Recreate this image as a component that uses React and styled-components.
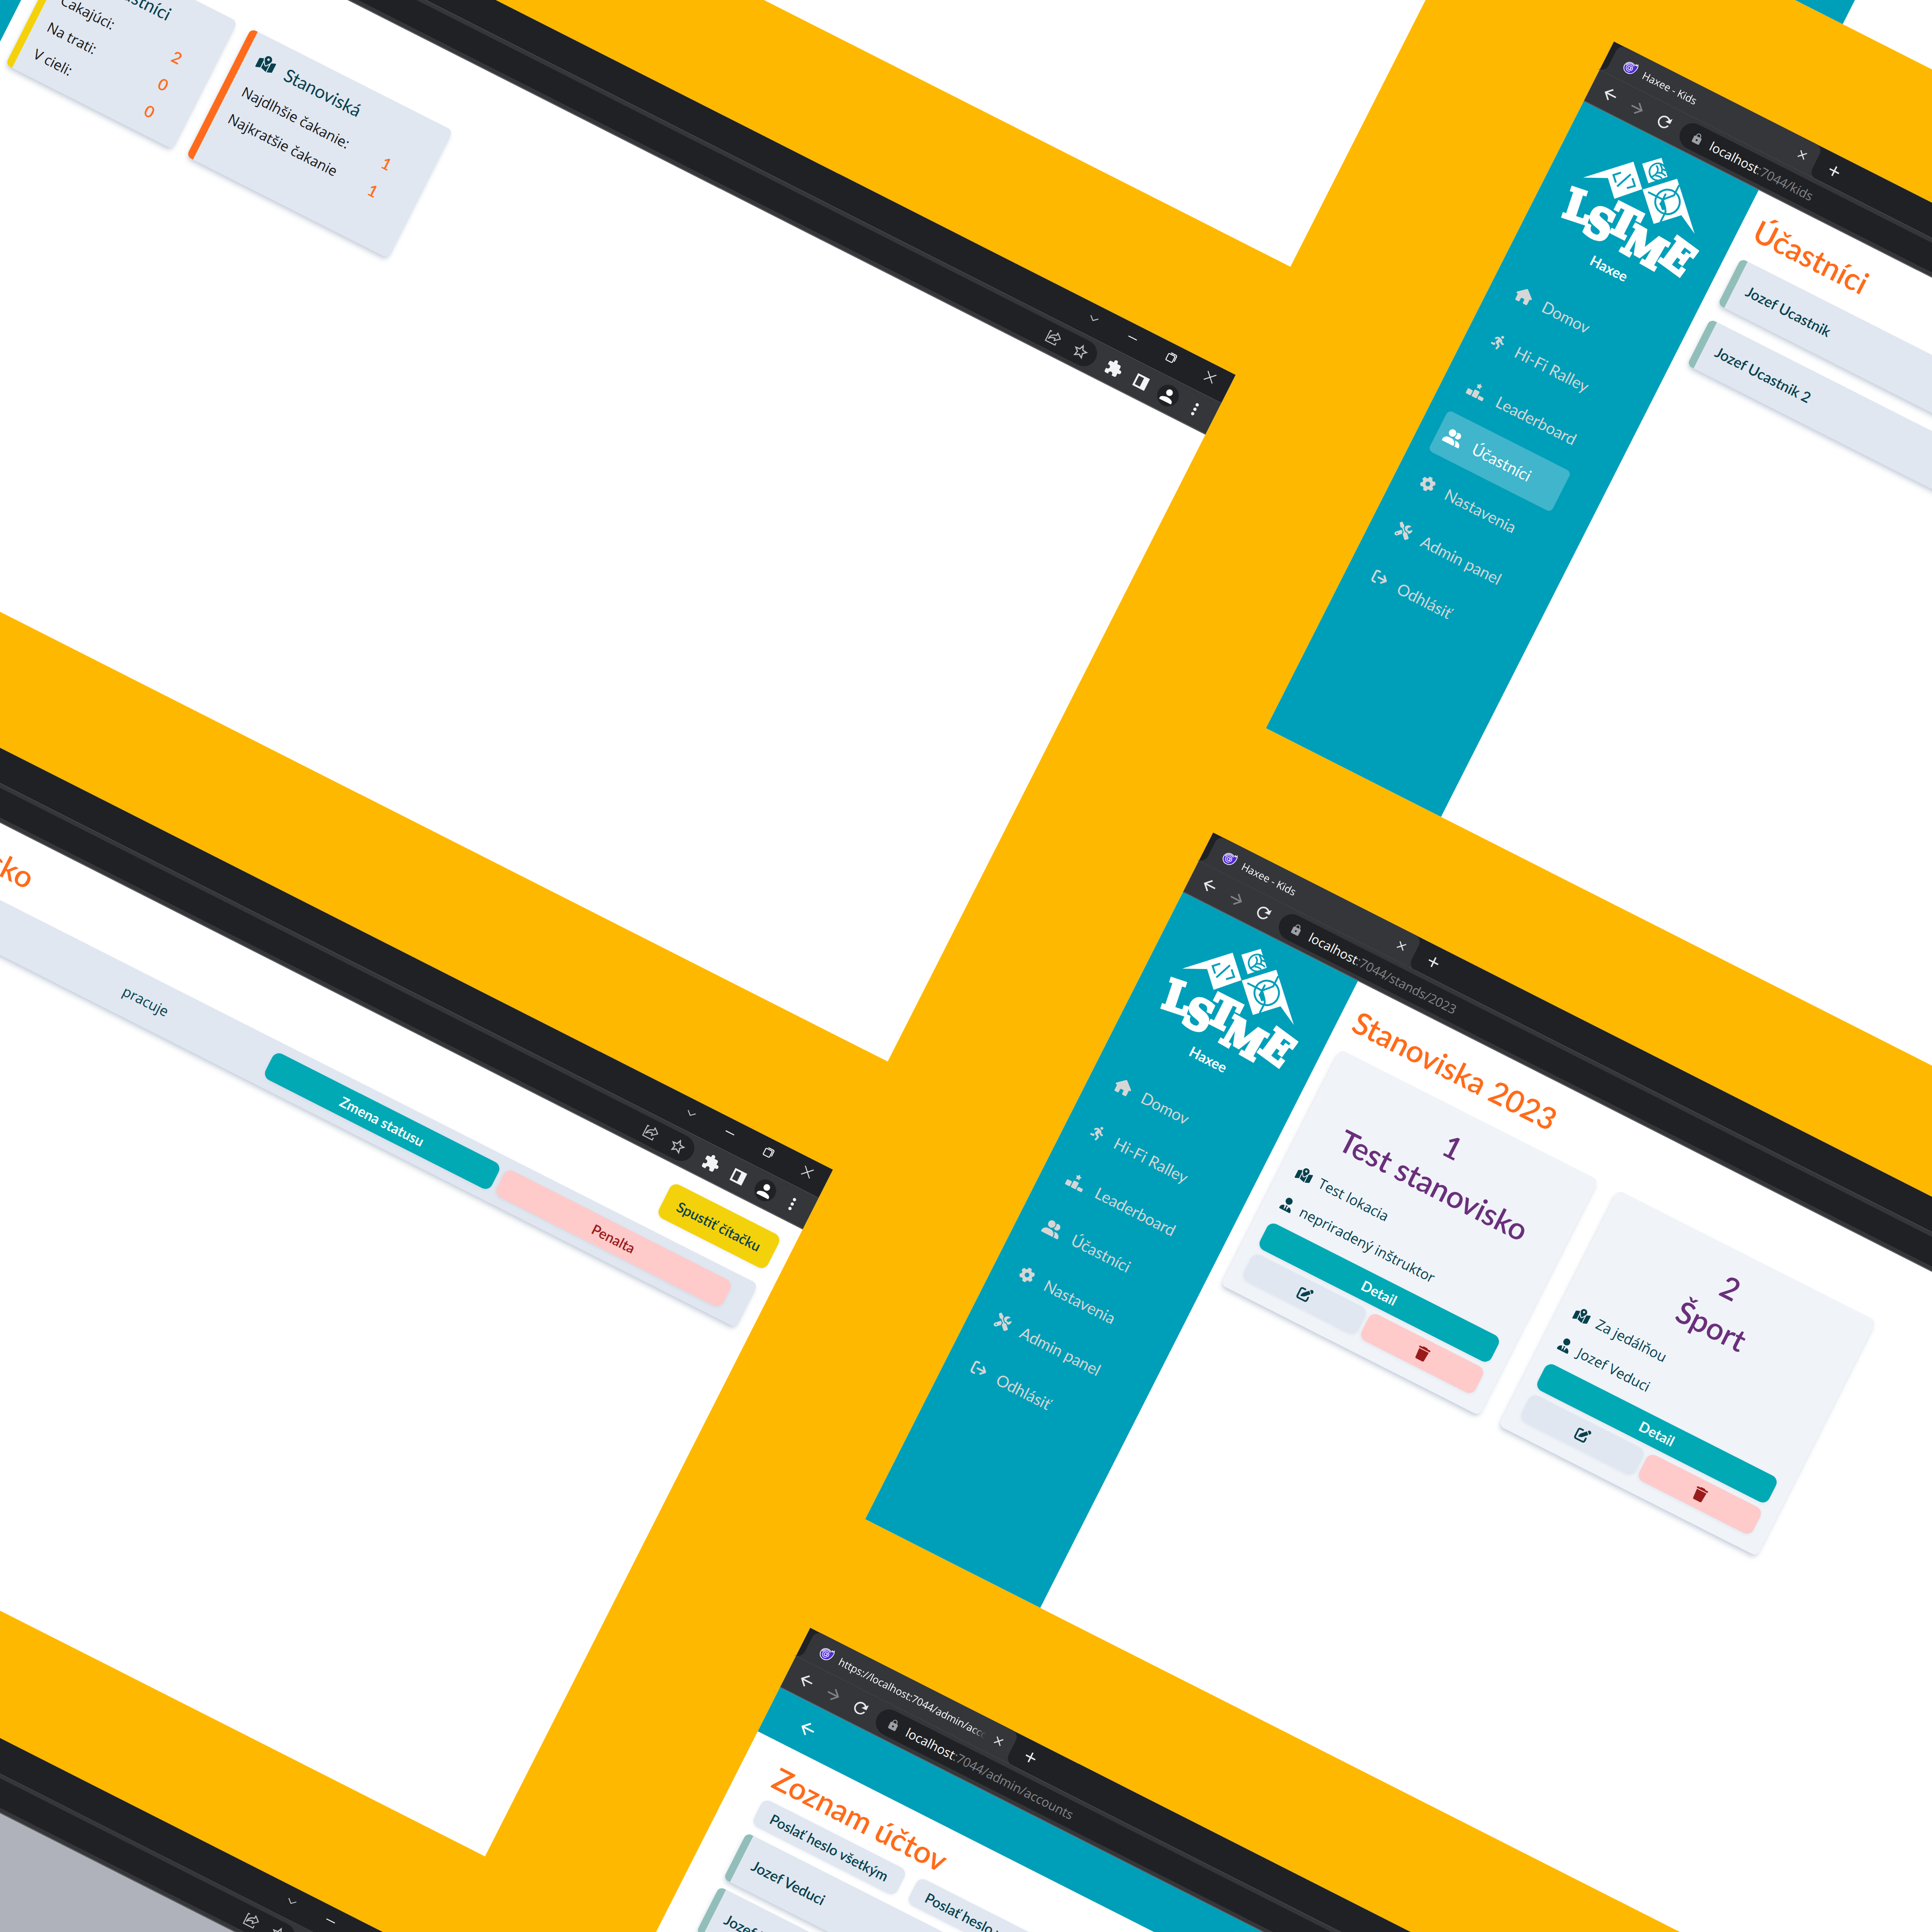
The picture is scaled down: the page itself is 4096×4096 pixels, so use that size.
import React from "react";
import styled, { createGlobalStyle, css } from "styled-components";
import {
  FaHouse,
  FaPersonRunning,
  FaRankingStar,
  FaUserGroup,
  FaGear,
  FaScrewdriverWrench,
  FaArrowRightFromBracket,
  FaMapLocationDot,
  FaUserTie,
  FaPenToSquare,
  FaTrash,
} from "react-icons/fa6";
import {
  MdArrowBack,
  MdArrowForward,
  MdRefresh,
  MdLock,
  MdClose,
  MdAdd,
  MdExtension,
  MdStarBorder,
  MdPerson,
  MdMoreVert,
} from "react-icons/md";

const color = {
  backdrop: "#ffb800",
  teal: "#009fb9",
  action: "#00a9b4",
  orange: "#ff6b1a",
  purple: "#6a2f7b",
  yellow: "#f4d20b",
  mint: "#92beb9",
  ink: "#06414d",
  panel: "#e1e7f0",
  card: "#f0f4f9",
  pink: "#fecaca",
  red: "#991b1b",
  frame: "#202124",
  toolbar: "#35363a",
};

const appFont = css`
  font-family: Lato, "Open Sans", sans-serif;
`;

const bodyFont = css`
  font-family: "Open Sans", "Noto Sans", sans-serif;
  font-size: 30px;
`;

const Global = createGlobalStyle`
  *, *::before, *::after { box-sizing: border-box; }
  html, body { margin: 0; background: ${color.backdrop}; }
  button { border: 0; margin: 0; font: inherit; color: inherit; cursor: pointer; }
  a { color: inherit; text-decoration: none; }
  h1, h2, p, dl, dt, dd, ul { margin: 0; padding: 0; font-weight: inherit; }
  svg { display: block; flex: none; }
`;

/* ---------- canvas ---------- */

const Stage = styled.div`
  height: 100vh;
  overflow: hidden;
  background: ${color.backdrop};
`;

const Board = styled.div`
  display: flex;
  align-items: flex-start;
  gap: 396px;
  width: max-content;
  transform-origin: 0 0;
  transform: rotate(26.87deg) translate(-376px, -3352px);
`;

const Column = styled.div`
  display: flex;
  flex-direction: column;
  padding-top: ${(p) => p.$top || 0}px;
`;

const Frame = styled.section`
  display: flex;
  flex-direction: column;
  width: 3072px;
  height: 1632px;
  margin-bottom: ${(p) => p.$gap}px;
  background: ${(p) => p.$surface || "#fff"};
  ${appFont}
`;

/* ---------- browser chrome ---------- */

const chromeFont = css`
  font-family: "Open Sans", "Noto Sans", sans-serif;
`;

const TabStrip = styled.div`
  display: flex;
  align-items: flex-start;
  flex: none;
  height: 67px;
  padding-left: 13px;
  background: ${color.frame};
  color: #fff;
  ${chromeFont}
`;

const Tab = styled.div`
  position: relative;
  display: flex;
  align-items: center;
  gap: 16px;
  width: 484px;
  height: 67px;
  padding: 0 18px 0 28px;
  border-radius: 16px 16px 0 0;
  background: ${color.toolbar};
  &::before,
  &::after {
    content: "";
    position: absolute;
    bottom: 0;
    width: 16px;
    height: 16px;
  }
  &::before {
    left: -16px;
    background: radial-gradient(circle at 0 0, transparent 15px, ${color.toolbar} 16px);
  }
  &::after {
    right: -16px;
    background: radial-gradient(circle at 100% 0, transparent 15px, ${color.toolbar} 16px);
  }
`;

const TabTitle = styled.span`
  flex: 1;
  overflow: hidden;
  white-space: nowrap;
  font-size: 22px;
  line-height: 32px;
  mask-image: linear-gradient(to right, #000 calc(100% - 32px), transparent 100%);
`;

const BareButton = styled.button`
  display: flex;
  align-items: center;
  justify-content: center;
  flex: none;
  width: ${(p) => p.$w || 56}px;
  height: ${(p) => p.$h || 56}px;
  padding: 0;
  background: none;
  color: ${(p) => p.$tone || "#e8eaed"};
`;

const NewTab = styled(BareButton)`
  margin-left: 16px;
  margin-right: auto;
  height: 67px;
`;

const Toolbar = styled.div`
  display: flex;
  align-items: center;
  gap: 8px;
  flex: none;
  height: 75px;
  padding: 0 16px;
  border-bottom: 2px solid #5b5c60;
  background: ${color.toolbar};
  ${chromeFont}
`;

const Omnibox = styled.div`
  display: flex;
  align-items: center;
  gap: 8px;
  flex: 1;
  height: 56px;
  margin: 0 8px 0 4px;
  padding: 0 8px 0 26px;
  border-radius: 28px;
  background: ${color.frame};
  color: #9aa0a6;
`;

const Address = styled.span`
  flex: 1;
  padding-left: 10px;
  font-size: 27px;
  line-height: 36px;
  white-space: nowrap;
  color: #82858a;
  b {
    font-weight: 400;
    color: #fff;
  }
`;

const Avatar = styled.span`
  display: flex;
  align-items: center;
  justify-content: center;
  width: 46px;
  height: 46px;
  border-radius: 50%;
  background: ${color.frame};
  color: #fff;
`;

const Line = ({ children }) => (
  <svg width="22" height="22" viewBox="0 0 22 22" fill="none" stroke="currentColor" strokeWidth="2">
    {children}
  </svg>
);

const Favicon = () => (
  <svg width="30" height="30" viewBox="0 0 32 32">
    <path
      d="M13 4.500c3.500-.7 6 0 8.500 1.500 1.500.9 2.700-.2 3.500-2.500 1 .5 1.400 1.500 1.300 2.500 1.200-.6 2.200-1.800 2.500-3.500 2.600 3.800 2.700 8 1.600 12.500C28.500 23 24 29.500 14.500 29.500 7 29.500 1.800 24 1.800 17.200 1.800 10.500 6.500 5.500 13 4.500z"
      fill="#512bd4"
      stroke="#fff"
      strokeWidth="1.600"
    />
    <g fill="none" stroke="#fff" strokeWidth="1.500" strokeLinecap="round">
      <circle cx="14.500" cy="17.500" r="3.300" />
      <path d="M17.800 14v5c0 2.600 4 2.300 4-1.500a7.300 7.300 0 1 0-3.200 6" />
      <path d="M22 9.500a11 11 0 0 0-17.500 5" />
    </g>
  </svg>
);

const ShareIcon = () => (
  <svg width="36" height="36" viewBox="0 0 24 24" fill="none" stroke="currentColor" strokeWidth="1.500">
    <path d="M6 5H3.500v15.500h15V17" />
    <path d="M14.500 3.500l7 6-7 6V12c-4 0-6.500 1-8.500 4 .5-5 3.500-8 8.500-8.700z" strokeLinejoin="round" />
  </svg>
);

const PanelIcon = () => (
  <svg width="32" height="32" viewBox="0 0 32 32">
    <path d="M2 2h28v28H2z" fill="#f1f3f4" />
    <path d="M6 6h12v20H6z" fill="#35363a" />
  </svg>
);

function Browser({ title, path, gap, surface, children }) {
  return (
    <Frame $gap={gap} $surface={surface}>
      <TabStrip>
        <Tab>
          <Favicon />
          <TabTitle>{title}</TabTitle>
          <BareButton $w={28} $h={28} aria-label="Close tab">
            <MdClose size={28} />
          </BareButton>
        </Tab>
        <NewTab aria-label="New tab">
          <MdAdd size={38} />
        </NewTab>
        <BareButton $w={92} $h={58} aria-label="Search tabs" $tone="#c4c7ca">
          <Line>
            <path d="M2 8l9 8 9-8" />
          </Line>
        </BareButton>
        <BareButton $w={92} $h={58} aria-label="Minimize" $tone="#fff">
          <Line>
            <path d="M1 11h20" />
          </Line>
        </BareButton>
        <BareButton $w={92} $h={58} aria-label="Restore" $tone="#fff">
          <Line>
            <rect x="2" y="5" width="15" height="15" rx="2" />
            <path d="M6 2h11a3 3 0 0 1 3 3v11" />
          </Line>
        </BareButton>
        <BareButton $w={92} $h={58} aria-label="Close window" $tone="#e4e4e4">
          <Line>
            <path d="M1 1l20 20M21 1L1 21" />
          </Line>
        </BareButton>
      </TabStrip>
      <Toolbar>
        <BareButton aria-label="Back">
          <MdArrowBack size={40} />
        </BareButton>
        <BareButton aria-label="Forward" $tone="#808286">
          <MdArrowForward size={40} />
        </BareButton>
        <BareButton aria-label="Reload">
          <MdRefresh size={40} />
        </BareButton>
        <Omnibox>
          <MdLock size={26} />
          <Address>
            {path && (
              <>
                <b>localhost</b>
                {path}
              </>
            )}
          </Address>
          <BareButton aria-label="Share" $tone="#bdc1c6">
            <ShareIcon />
          </BareButton>
          <BareButton aria-label="Bookmark" $tone="#bdc1c6">
            <MdStarBorder size={38} />
          </BareButton>
        </Omnibox>
        <BareButton aria-label="Extensions" $tone="#f1f3f4">
          <MdExtension size={38} />
        </BareButton>
        <BareButton aria-label="Side panel">
          <PanelIcon />
        </BareButton>
        <BareButton aria-label="Profile">
          <Avatar>
            <MdPerson size={42} />
          </Avatar>
        </BareButton>
        <BareButton aria-label="Menu" $tone="#f1f3f4">
          <MdMoreVert size={42} />
        </BareButton>
      </Toolbar>
      {children}
    </Frame>
  );
}

/* ---------- app shell ---------- */

const Shell = styled.div`
  display: flex;
  flex: 1;
  min-height: 0;
`;

const Sidebar = styled.aside`
  display: flex;
  flex-direction: column;
  flex: none;
  width: 416px;
  padding: 28px 40px;
  background: ${color.teal};
`;

const Brand = styled.div`
  display: flex;
  flex-direction: column;
  align-items: center;
  margin-bottom: 66px;
  color: #fff;
  font-size: 30px;
  font-weight: 700;
  line-height: 40px;
`;

const LogoArt = styled.svg`
  margin-bottom: 11px;
  text {
    font-family: "DejaVu Serif Condensed", "DejaVu Serif", serif;
    font-weight: 700;
    font-size: 88px;
    fill: #fff;
    stroke: #fff;
    stroke-width: 7px;
  }
`;

function Logo() {
  return (
    <LogoArt width="308" height="232" viewBox="54 170 308 232" role="img" aria-label="LSTME">
      <g fill="#fff">
        <path d="M72 287L152 208.500 195 252 151.500 297 119.500 264z" />
        <path d="M201.500 174.500L231 204.500 201 235 170.500 204z" />
        <path d="M251 199L337 286.500 294 264 250 307 196 252.500z" />
      </g>
      <g fill="none" stroke={color.teal} strokeWidth="4">
        <path d="M139 241l-12 12 12 12M159 235l-14 36M166 241l12 12-13 12" />
        <circle cx="255" cy="252" r="26" />
        <path d="M209 252h35l17-18.500V209M244 238v27M244 252l12 13 5 8v24" />
        <path d="M241 262l8-7 10 12-6 6z" fill={color.teal} stroke="none" />
      </g>
      <g fill="none" stroke={color.teal} strokeWidth="3.500">
        <path d="M219 190a18 18 0 1 0 1 28" />
        <path d="M199 194c6 2 9 8 8 14s-5 11-8 14" />
        <path d="M205 188c6 3 10 8 11 15M208 207c6-5 12-5 19-2M207 214c6-3 10-3 15-1M213 196c3-2 6-2 9-1" />
      </g>
      <g>
        <text transform="translate(68 380) rotate(-8.500)">L</text>
        <text transform="translate(120 391) rotate(-2)">S</text>
        <text transform="translate(163 363)">T</text>
        <text transform="translate(210 389) rotate(3)">M</text>
        <text transform="translate(293 371) rotate(9.500)">E</text>
      </g>
    </LogoArt>
  );
}

/* Glyphs share one height; their widths follow the icon set's own proportions. */
const Glyph = styled.span`
  flex: none;
  width: ${(p) => p.$w}px;
  height: ${(p) => p.$h}px;
  svg {
    width: 100%;
    height: 100%;
  }
`;

const Nav = styled.nav`
  display: flex;
  flex-direction: column;
  gap: 16px;
  width: 292px;
`;

const NavItem = styled.a`
  display: flex;
  align-items: center;
  gap: 27px;
  height: 96px;
  padding: 0 16px;
  border-radius: 10px;
  font-size: 34px;
  line-height: 48px;
  white-space: nowrap;
  color: ${(p) => (p.$active ? "#fff" : "#d6d6d6")};
  background: ${(p) => (p.$active ? "#41b5cb" : "transparent")};
`;

const navItems = [
  [FaHouse, 36, "Domov"],
  [FaPersonRunning, 28, "Hi-Fi Ralley"],
  [FaRankingStar, 40, "Leaderboard"],
  [FaUserGroup, 40, "Účastníci"],
  [FaGear, 32, "Nastavenia"],
  [FaScrewdriverWrench, 32, "Admin panel"],
  [FaArrowRightFromBracket, 32, "Odhlásiť"],
];

const Main = styled.main`
  display: flex;
  flex-direction: column;
  flex: 1;
  gap: 28px;
  min-width: 0;
  padding: 34px 32px;
`;

function AppShell({ active, children }) {
  return (
    <Shell>
      <Sidebar>
        <Brand>
          <Logo />
          Haxee
        </Brand>
        <Nav>
          {navItems.map(([Icon, width, label]) => (
            <NavItem href="#" key={label} $active={label === active}>
              <Glyph $w={width} $h={32}>
                <Icon />
              </Glyph>
              {label}
            </NavItem>
          ))}
        </Nav>
      </Sidebar>
      <Main>{children}</Main>
    </Shell>
  );
}

/* ---------- shared parts ---------- */

const shadow = css`
  box-shadow: 0 8px 12px -2px #94a3b866, 0 4px 8px -4px #94a3b866;
`;

const Title = styled.h1`
  font-size: 65px;
  line-height: 84px;
  font-weight: 600;
  white-space: nowrap;
  color: ${color.orange};
`;

const TitleRow = styled.div`
  display: flex;
  align-items: flex-start;
  justify-content: space-between;
`;

const tones = {
  teal: [color.action, "#fff", 700],
  pink: [color.pink, color.red, 600],
  grey: [color.panel, color.ink, 600],
  yellow: [color.yellow, color.ink, 600],
};

const Button = styled.button`
  display: flex;
  align-items: center;
  justify-content: center;
  height: ${(p) => (p.$tall ? 80 : 62)}px;
  padding: 0 32px;
  border-radius: 16px;
  font-size: 30px;
  line-height: 40px;
  white-space: nowrap;
  background: ${(p) => tones[p.$tone][0]};
  color: ${(p) => tones[p.$tone][1]};
  font-weight: ${(p) => tones[p.$tone][2]};
  box-shadow: 0 2px 6px #94a3b833;
`;

const List = styled.ul`
  display: flex;
  flex-direction: column;
  gap: ${(p) => p.$gap}px;
  list-style: none;
`;

const PersonRow = styled.a`
  display: flex;
  align-items: center;
  height: 110px;
  padding: 0 26px;
  border-left: 16px solid ${color.mint};
  border-radius: 12px;
  background: ${color.panel};
  color: ${color.ink};
  font-size: 31px;
  font-weight: 600;
  line-height: 40px;
  ${shadow}
`;

const People = ({ names, gap }) => (
  <List $gap={gap}>
    {names.map((name) => (
      <li key={name}>
        <PersonRow href="#">{name}</PersonRow>
      </li>
    ))}
  </List>
);

/* ---------- dashboard ---------- */

const Stats = styled.div`
  display: flex;
  gap: 32px;
`;

const StatCard = styled.section`
  width: ${(p) => p.$w}px;
  padding: 16px 28px;
  border-left: 16px solid ${(p) => p.$accent};
  border-radius: 12px;
  background: ${color.panel};
  ${shadow}
`;

const StatHead = styled.h2`
  display: flex;
  align-items: center;
  gap: 26px;
  height: 72px;
  margin-bottom: 6px;
  font-size: 38px;
  line-height: 48px;
  color: ${color.ink};
`;

const StatGrid = styled.dl`
  display: grid;
  grid-template-columns: 2fr 1fr;
  grid-auto-rows: 64px;
  align-items: center;
  min-height: 194px;
  line-height: 40px;
  white-space: nowrap;
  color: #17181a;
  ${bodyFont}
  dd {
    padding-left: 4px;
    text-align: center;
    font-size: 34px;
    font-weight: 600;
    color: ${color.orange};
    ${appFont}
  }
`;

function Stat({ icon: Icon, iconWidth, title, accent, width, rows }) {
  return (
    <StatCard $accent={accent} $w={width}>
      <StatHead>
        <Glyph $w={iconWidth} $h={34}>
          <Icon />
        </Glyph>
        {title}
      </StatHead>
      <StatGrid>
        {rows.map(([label, value]) => (
          <React.Fragment key={label}>
            <dt>{label}</dt>
            <dd>{value}</dd>
          </React.Fragment>
        ))}
      </StatGrid>
    </StatCard>
  );
}

/* ---------- stand detail ---------- */

const StatusRow = styled.div`
  display: grid;
  grid-template-columns: 1fr 562px 538px 538px;
  align-items: center;
  gap: 12px;
  height: 104px;
  padding: 0 48px 0 28px;
  border-left: 16px solid ${color.mint};
  border-radius: 12px;
  background: ${color.panel};
  color: ${color.ink};
  line-height: 40px;
  ${shadow}
`;

const Status = styled.span`
  text-align: center;
  ${bodyFont}
`;

/* ---------- stands ---------- */

const Cards = styled.div`
  display: flex;
  gap: 46px;
`;

const StandCard = styled.article`
  display: flex;
  flex-direction: column;
  gap: 12px;
  width: 614px;
  padding: 32px;
  border-radius: 12px;
  background: ${color.card};
  ${shadow}
`;

const StandName = styled.h2`
  margin-bottom: 12px;
  font-size: 65px;
  font-weight: 600;
  line-height: 90px;
  text-align: center;
  white-space: nowrap;
  color: ${color.purple};
`;

const Facts = styled.div`
  color: ${color.ink};
  line-height: 72px;
  ${bodyFont}
`;

const Fact = styled.p`
  display: flex;
  align-items: center;
  gap: 18px;
  padding-left: 4px;
`;

const Pair = styled.div`
  display: grid;
  grid-template-columns: 1fr 1fr;
  gap: 8px;
`;

function Stand({ number, name, place, leader }) {
  return (
    <StandCard>
      <StandName>
        {number}
        <br />
        {name}
      </StandName>
      <Facts>
        <Fact>
          <Glyph $w={34} $h={30}>
            <FaMapLocationDot />
          </Glyph>
          {place}
        </Fact>
        <Fact>
          <Glyph $w={26} $h={30}>
            <FaUserTie />
          </Glyph>
          {leader}
        </Fact>
      </Facts>
      <Button $tone="teal">Detail</Button>
      <Pair>
        <Button $tone="grey" aria-label="Upraviť">
          <FaPenToSquare size={30} />
        </Button>
        <Button $tone="pink" aria-label="Odstrániť">
          <FaTrash size={30} />
        </Button>
      </Pair>
    </StandCard>
  );
}

/* ---------- accounts ---------- */

const TopBar = styled.header`
  display: flex;
  align-items: center;
  flex: none;
  height: 104px;
  padding: 0 64px;
  background: ${color.teal};
  color: #fff;
`;

const Accounts = styled.main`
  display: flex;
  flex-direction: column;
  gap: 20px;
  padding: 26px 76px;
`;

const Pills = styled.div`
  display: flex;
  gap: 28px;
`;

const AccountsHead = styled.div`
  display: flex;
  flex-direction: column;
  gap: 10px;
`;

export default function App() {
  return (
    <Stage>
      <Global />
      <Board>
        <Column $top={988}>
          <Frame $gap={257} />
          <Browser gap={257}>
            <Shell>
              <Sidebar />
              <Main>
                <Title>Domov</Title>
                <Stats>
                  <Stat
                    icon={FaUserGroup}
                    iconWidth={42}
                    title="Účastníci"
                    accent={color.yellow}
                    width={398}
                    rows={[
                      ["Čakajúci:", 2],
                      ["Na trati:", 0],
                      ["V cieli:", 0],
                    ]}
                  />
                  <Stat
                    icon={FaMapLocationDot}
                    iconWidth={38}
                    title="Stanoviská"
                    accent={color.orange}
                    width={480}
                    rows={[
                      ["Najdlhšie čakanie:", 1],
                      ["Najkratšie čakanie", 1],
                    ]}
                  />
                </Stats>
              </Main>
            </Shell>
          </Browser>
          <Browser gap={241}>
            <Shell>
              <Sidebar />
              <Main>
                <TitleRow>
                  <Title>Stanovisko — Test stanovisko</Title>
                  <Button $tone="yellow" $tall>
                    Spustiť čítačku
                  </Button>
                </TitleRow>
                <StatusRow>
                  <span>Jozef Ucastnik</span>
                  <Status>pracuje</Status>
                  <Button $tone="teal">Zmena statusu</Button>
                  <Button $tone="pink">Penalta</Button>
                </StatusRow>
              </Main>
            </Shell>
          </Browser>
          <Browser gap={0} surface="#afb2bb" />
        </Column>
        <Column>
          <Frame $gap={252}>
            <Shell>
              <Sidebar />
            </Shell>
          </Frame>
          <Browser title="Haxee - Kids" path=":7044/kids" gap={248}>
            <AppShell active="Účastníci">
              <Title>Účastníci</Title>
              <People names={["Jozef Ucastnik", "Jozef Ucastnik 2"]} gap={34} />
            </AppShell>
          </Browser>
          <Browser title="Haxee - Kids" path=":7044/stands/2023" gap={258}>
            <AppShell>
              <Title>Stanoviska 2023</Title>
              <Cards>
                <Stand number="1" name="Test stanovisko" place="Test lokacia" leader="nepriradený inštruktor" />
                <Stand number="2" name="Šport" place="Za jedálňou" leader="Jozef Veduci" />
              </Cards>
            </AppShell>
          </Browser>
          <Browser title="https://localhost:7044/admin/accounts" path=":7044/admin/accounts" gap={0}>
            <TopBar>
              <BareButton aria-label="Späť" $tone="#fff">
                <MdArrowBack size={44} />
              </BareButton>
            </TopBar>
            <Accounts>
              <AccountsHead>
                <Title>Zoznam účtov</Title>
                <Pills>
                  <Button $tone="grey">Poslať heslo všetkým</Button>
                  <Button $tone="grey">Poslať heslo vybraným</Button>
                </Pills>
              </AccountsHead>
              <People names={["Jozef Veduci", "Jozef Ucastnik"]} gap={18} />
            </Accounts>
          </Browser>
        </Column>
      </Board>
    </Stage>
  );
}
